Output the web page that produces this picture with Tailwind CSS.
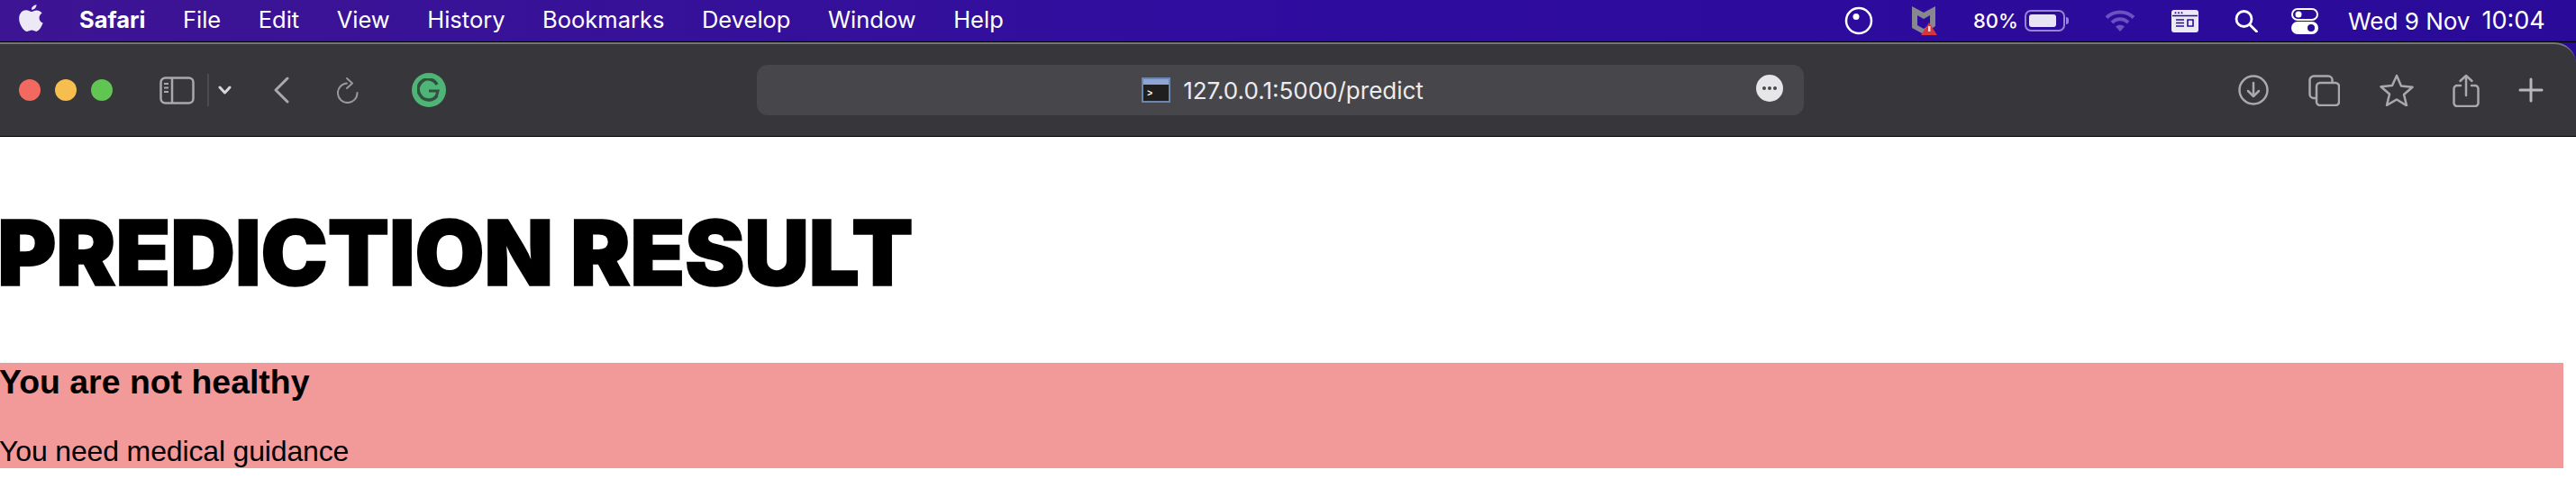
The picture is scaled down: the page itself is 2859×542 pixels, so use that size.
<!DOCTYPE html>
<html lang="en">
<head>
    <meta charset="UTF-8">
    <title>Prediction result</title>
    <script src="https://cdn.jsdelivr.net/npm/@tailwindcss/browser@4"></script>
</head>
<body class="bg-white w-[2859px] h-[542px] overflow-hidden font-['Liberation_Sans',sans-serif]">
    <!-- menu bar -->
    <div class="h-[46px] flex items-center bg-gradient-to-r from-[#3d1493] via-[#2f0c9f] to-[#2a0b99] text-white font-['Inter',sans-serif] text-[25.500px]">
        <svg class="ml-[20px] w-[28px] h-[34px] mb-[4px] text-[#ece8f6]" viewBox="0 0 24 29" fill="currentColor">
            <path d="M17.6 1c.1 2-1.800 4.900-4.700 4.800-.3-2.300 1.900-4.600 4.700-4.800zM12.900 7.600c1.200 0 2.800-1.400 5-1.300 1.500 0 3.700.7 4.900 2.600-3.900 2.400-3.300 7.800.9 9.500-1 2.800-3.700 8-6.300 8-1.600 0-2.300-1.100-4.300-1.100s-2.800 1.100-4.400 1.100C5.500 26.400 1 19.700 1 14.200c0-5.300 3.400-8 6.600-8 2.200 0 3.900 1.400 5.300 1.400z"/>
        </svg>
        <div class="ml-[40px] mb-[2px] flex items-center gap-[41.500px]">
            <span class="font-bold">Safari</span>
            <span>File</span>
            <span>Edit</span>
            <span>View</span>
            <span>History</span>
            <span>Bookmarks</span>
            <span>Develop</span>
            <span>Window</span>
            <span>Help</span>
        </div>
        <div class="ml-auto flex items-center w-[804px] h-[46px]">
            <svg class="ml-[-8px] w-[32px] h-[32px]" viewBox="0 0 32 32" fill="none" stroke="white" stroke-width="2.500">
                <circle cx="16" cy="16" r="14"/>
                <circle cx="13" cy="11.500" r="3.500" fill="white" stroke="none"/>
            </svg>
            <svg class="ml-[41px] w-[32px] h-[34px]" viewBox="0 0 32 34">
                <path d="M2 1l13 7 13-7v22l-13 9-13-7z M8 11v11l7 4 7-5V11l-7 4z" fill="#87878f" fill-rule="evenodd"/>
                <path d="M21 19l9 14H12z" fill="#d8343c"/>
                <rect x="20" y="23" width="2.500" height="6" fill="#f5d6d6"/>
            </svg>
            <span class="ml-[38px] w-[47px] text-[22px] font-medium">80%</span>
            <div class="ml-[10px] w-[45px] h-[24px] rounded-[7px] border-2 border-white/50 p-[3px]">
                <div class="w-[30px] h-full rounded-[3px] bg-[#e8e4f4]"></div>
            </div>
            <div class="w-[3px] h-[8px] rounded-r-full bg-white/50 ml-[1px]"></div>
            <svg class="ml-[40px] w-[34px] h-[26px]" viewBox="0 0 34 26" fill="none" stroke="#6a52c0" stroke-width="4">
                <path d="M2 9.500C10 1.500 24 1.500 32 9.500"/>
                <path d="M8 15c5-5 13-5 18 0"/>
                <path d="M17 25l-5-5.500c3-2.500 7-2.500 10 0z" fill="#6a52c0" stroke="none"/>
            </svg>
            <svg class="ml-[40px] w-[30px] h-[25px]" viewBox="0 0 30 25">
                <path d="M3 0h24a3 3 0 013 3v19a3 3 0 01-3 3H3a3 3 0 01-3-3V3a3 3 0 013-3z" fill="#ece9f7"/>
                <circle cx="4.500" cy="3.200" r="1" fill="#2a0b99"/>
                <circle cx="8" cy="3.200" r="1" fill="#2a0b99"/>
                <circle cx="11.500" cy="3.200" r="1" fill="#2a0b99"/>
                <path d="M1 6.500h28" stroke="#2a0b99" stroke-width="1.500"/>
                <path d="M5 11h9M5 14.500h9M5 18h9M18 11h6v7h-6z" stroke="#2a0b99" stroke-width="1.600" fill="none"/>
            </svg>
            <svg class="ml-[39px] w-[28px] h-[25px]" viewBox="0 0 28 25" fill="none" stroke="white" stroke-width="2.800">
                <circle cx="11.500" cy="10" r="8.500"/>
                <path d="M18 16.500l7.500 7.500" stroke-linecap="round"/>
            </svg>
            <svg class="ml-[36px] w-[30px] h-[29px]" viewBox="0 0 30 29">
                <rect x="1" y="1" width="28" height="12" rx="6" fill="none" stroke="white" stroke-width="2"/>
                <circle cx="8" cy="7" r="3.500" fill="white"/>
                <rect y="15" width="30" height="14" rx="7" fill="white"/>
                <circle cx="22" cy="22" r="4" fill="#2a0b99"/>
            </svg>
            <span class="ml-[33px] text-[26px] whitespace-nowrap">Wed 9 Nov</span>
            <span class="ml-[13px] text-[27px]">10:04</span>
        </div>
    </div>
    <div class="h-[1px] bg-black"></div>

    <!-- safari toolbar -->
    <div class="bg-[#2a0b99]">
        <div class="h-[105px] rounded-tr-[24px] bg-[#37363b] border-t-2 border-[#76757a] border-b border-b-black flex items-center">
            <div class="ml-[21px] flex gap-[16px]">
                <div class="w-[24px] h-[24px] rounded-full bg-[#f26a5f]"></div>
                <div class="w-[24px] h-[24px] rounded-full bg-[#f6be4f]"></div>
                <div class="w-[24px] h-[24px] rounded-full bg-[#61c554]"></div>
            </div>
            <svg class="ml-[52px] w-[39px] h-[31px]" viewBox="0 0 39 31" fill="none" stroke="#a9a8ac" stroke-width="2.500">
                <rect x="1.500" y="1.500" width="36" height="28" rx="5"/>
                <path d="M14 1.500v28"/>
                <path d="M5 8h5M5 12.500h5M5 17h5" stroke-width="2"/>
            </svg>
            <div class="ml-[14px] w-[2px] h-[36px] bg-[#4c4b50]"></div>
            <svg class="ml-[10px] w-[15px] h-[10px]" viewBox="0 0 15 10" fill="none" stroke="#d6d5d8" stroke-width="3" stroke-linecap="round" stroke-linejoin="round">
                <path d="M2 2l5.500 6L13 2"/>
            </svg>
            <svg class="ml-[46px] w-[18px] h-[30px]" viewBox="0 0 18 30" fill="none" stroke="#a9a8ac" stroke-width="3" stroke-linecap="round" stroke-linejoin="round">
                <path d="M16 2L3 15l13 13"/>
            </svg>
            <svg class="ml-[53px] w-[24px] h-[29px]" viewBox="0 0 24 29" fill="none" stroke="#99989c" stroke-width="2" stroke-linecap="round" stroke-linejoin="round">
                <path d="M11 6.500A10.800 10.800 0 1022.500 17"/>
                <path d="M11 1l6 5.500-6 5.500"/>
            </svg>
            <div class="ml-[59px] w-[38px] h-[38px] rounded-full bg-[#4fb577] flex items-center justify-center">
                <svg class="w-[26px] h-[26px]" viewBox="0 0 26 26" fill="none" stroke="#32503f" stroke-width="3.500">
                    <path d="M22 7A11 11 0 103 18a11 11 0 0019 1"/>
                    <path d="M13 14h10l-2 7" stroke-width="3"/>
                </svg>
            </div>
            <!-- address bar -->
            <div class="ml-[345px] w-[1162px] h-[56px] rounded-[12px] bg-[#47464b] relative flex items-center justify-center">
                <div class="flex items-center gap-[14px] ml-[5px]">
                    <div class="w-[32px] h-[28px] border-2 border-[#6c86b0] bg-[#1f1f20] relative">
                        <div class="h-[6px] bg-[#8ea6d4]"></div>
                        <div class="absolute left-[4px] top-[11px] text-white text-[10px] leading-[10px] font-bold">&gt;</div>
                    </div>
                    <span class="font-['Inter',sans-serif] text-[26px] text-[#ececee]">127.0.0.1:5000/predict</span>
                </div>
                <div class="absolute right-[23px] top-[11px] w-[30px] h-[30px] rounded-full bg-[#e6e6e8] flex items-center justify-center gap-[2px]">
                    <div class="w-[4px] h-[4px] rounded-full bg-[#47464b]"></div>
                    <div class="w-[4px] h-[4px] rounded-full bg-[#47464b]"></div>
                    <div class="w-[4px] h-[4px] rounded-full bg-[#47464b]"></div>
                </div>
            </div>
            <!-- right side icons -->
            <svg class="ml-[482px] w-[34px] h-[34px]" viewBox="0 0 34 34" fill="none" stroke="#a9a8ac" stroke-width="2.500" stroke-linecap="round" stroke-linejoin="round">
                <circle cx="17" cy="17" r="15.500"/>
                <path d="M17 9v15M11 18l6 6 6-6"/>
            </svg>
            <svg class="ml-[44px] w-[35px] h-[35px]" viewBox="0 0 35 35" fill="none" stroke="#a9a8ac" stroke-width="2.500">
                <rect x="9" y="9" width="25" height="25" rx="4"/>
                <path d="M9 26H6a4.500 4.500 0 01-4.500-4.500V6A4.500 4.500 0 016 1.500h16A4.500 4.500 0 0126.500 6v3"/>
            </svg>
            <svg class="ml-[44px] w-[38px] h-[36px]" viewBox="0 0 38 36" fill="none" stroke="#a9a8ac" stroke-width="2.500" stroke-linejoin="round">
                <path d="M19 2l5 11.500 12.500 1.200-9.500 8.300 3 12.300L19 28.500 8 34.800l3-12.300-9.500-8.300L14 13z"/>
            </svg>
            <svg class="ml-[43px] w-[30px] h-[37px]" viewBox="0 0 30 37" fill="none" stroke="#a9a8ac" stroke-width="2.500" stroke-linecap="round" stroke-linejoin="round">
                <path d="M9 13H5a3.500 3.500 0 00-3.500 3.500v16A3.500 3.500 0 005 36h20a3.500 3.500 0 003.500-3.500v-16A3.500 3.500 0 0025 13h-4"/>
                <path d="M15 24V2M8.500 8L15 2l6.500 6"/>
            </svg>
            <svg class="ml-[43px] w-[28px] h-[28px]" viewBox="0 0 28 28" fill="none" stroke="#b8b7bb" stroke-width="3" stroke-linecap="round">
                <path d="M14 2v24M2 14h24"/>
            </svg>
        </div>
    </div>

    <!-- page -->
    <h1 class="ml-[-3px] mt-[71px] h-[116px] flex items-center font-['Inter',sans-serif] font-black text-[100px] leading-none tracking-[-0.55px] [-webkit-text-stroke:1.5px_black] text-black whitespace-nowrap">PREDICTION RESULT</h1>
    <div class="mt-[64px] w-[2845px] h-[117px] bg-[#f29999] text-black">
        <h3 class="ml-[-1px] font-bold text-[37.440px] leading-[43px]">You are not healthy</h3>
        <p class="mt-[37px] ml-[-1px] text-[32px] leading-[36px] tracking-[-0.15px]">You need medical guidance</p>
    </div>
</body>
</html>
